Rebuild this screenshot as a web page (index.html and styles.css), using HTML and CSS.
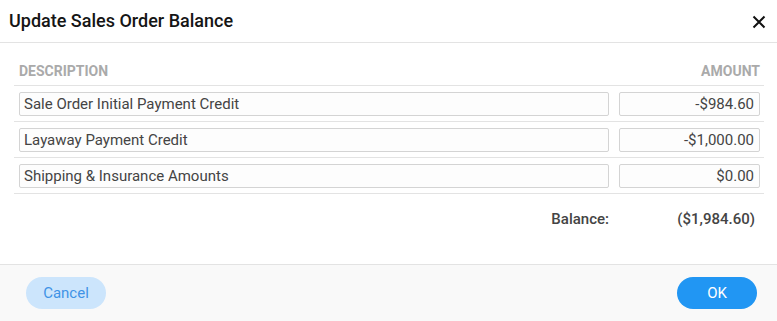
FILE: index.html
```html
<!DOCTYPE html>
<html lang="en">
<head>
    <meta charset="UTF-8">
    <meta name="viewport" content="width=device-width, initial-scale=1.0">
    <title>Update Sales Order Balance</title>
    <link rel="stylesheet" href="styles.css">
</head>
<body>
    <div class="dialog">
        <div class="dialog-header">
            <h1 class="dialog-title">Update Sales Order Balance</h1>
            <button class="close-button" aria-label="Close">
                <svg width="14" height="14" viewBox="0 0 14 14">
                    <path d="M1.5 1.5 L12.5 12.5 M12.5 1.5 L1.5 12.5" stroke="#111" stroke-width="2" fill="none"/>
                </svg>
            </button>
        </div>

        <div class="dialog-body">
            <div class="balance-table">
                <div class="table-head">
                    <span>Description</span>
                    <span class="right">Amount</span>
                </div>
                <div class="table-row">
                    <input type="text" class="desc-input" value="Sale Order Initial Payment Credit">
                    <input type="text" class="amount-input" value="-$984.60">
                </div>
                <div class="table-row">
                    <input type="text" class="desc-input" value="Layaway Payment Credit">
                    <input type="text" class="amount-input" value="-$1,000.00">
                </div>
                <div class="table-row">
                    <input type="text" class="desc-input" value="Shipping &amp; Insurance Amounts">
                    <input type="text" class="amount-input" value="$0.00">
                </div>
                <div class="balance-row">
                    <span class="balance-label">Balance:</span>
                    <span class="balance-value">($1,984.60)</span>
                </div>
            </div>
        </div>

        <div class="dialog-footer">
            <button class="btn btn-cancel">Cancel</button>
            <button class="btn btn-ok">OK</button>
        </div>
    </div>
</body>
</html>
```

FILE: styles.css
```css
* {
    box-sizing: border-box;
}

body {
    margin: 0;
    font-family: Roboto, "Liberation Sans", Arial, sans-serif;
    background-color: #fff;
}

.dialog {
    width: 777px;
    height: 321px;
    display: flex;
    flex-direction: column;
    background-color: #fff;
}

.dialog-header {
    height: 43px;
    display: flex;
    align-items: center;
    justify-content: space-between;
    padding: 0 10px 1px 9px;
    border-bottom: 1px solid #e3e3e3;
}

.dialog-title {
    margin: 0;
    font-size: 18px;
    font-weight: 500;
    color: #151515;
}

.close-button {
    width: 16px;
    height: 16px;
    padding: 0;
    margin-top: 2px;
    border: none;
    background: none;
    display: flex;
    align-items: center;
    justify-content: center;
    cursor: pointer;
}

.dialog-body {
    flex: 1;
    padding: 14px 13px 0 14px;
}

.table-head {
    height: 29px;
    display: grid;
    grid-template-columns: 1fr 141px;
    column-gap: 10px;
    padding: 0 4px 0 5px;
    border-bottom: 1px solid #e3e3e3;
    font-size: 14px;
    font-weight: 700;
    line-height: 28px;
    color: #aaa;
    text-transform: uppercase;
}

.right {
    text-align: right;
}

.table-row {
    display: grid;
    grid-template-columns: 1fr 141px;
    column-gap: 10px;
    padding: 6px 4px 5px 5px;
    border-bottom: 1px solid #e3e3e3;
}

.table-row input {
    height: 24px;
    width: 100%;
    margin: 0;
    padding: 0 5px 0 4px;
    border: 1px solid #d4d4d4;
    border-radius: 2px;
    background-color: #fdfdfd;
    font-family: Roboto, "Liberation Sans", Arial, sans-serif;
    font-size: 15px;
    color: #444;
}

.amount-input {
    text-align: right;
}

.balance-row {
    display: grid;
    grid-template-columns: 1fr 141px;
    column-gap: 10px;
    padding: 15px 4px 0 5px;
    line-height: 20px;
    font-size: 15px;
    font-weight: 500;
    color: #444;
}

.balance-label {
    text-align: right;
}

.balance-value {
    text-align: right;
    padding-right: 5px;
}

.dialog-footer {
    height: 57px;
    display: flex;
    justify-content: space-between;
    align-items: flex-start;
    padding: 12px 20px 0 26px;
    border-top: 1px solid #e3e3e3;
    background-color: #f9f9f9;
}

.btn {
    width: 80px;
    height: 32px;
    border: none;
    border-radius: 16px;
    font-family: Roboto, "Liberation Sans", Arial, sans-serif;
    font-size: 15px;
    cursor: pointer;
}

.btn-cancel {
    background-color: #cce5fc;
    color: #3f93e6;
}

.btn-ok {
    background-color: #2196f3;
    color: #fff;
}
```
